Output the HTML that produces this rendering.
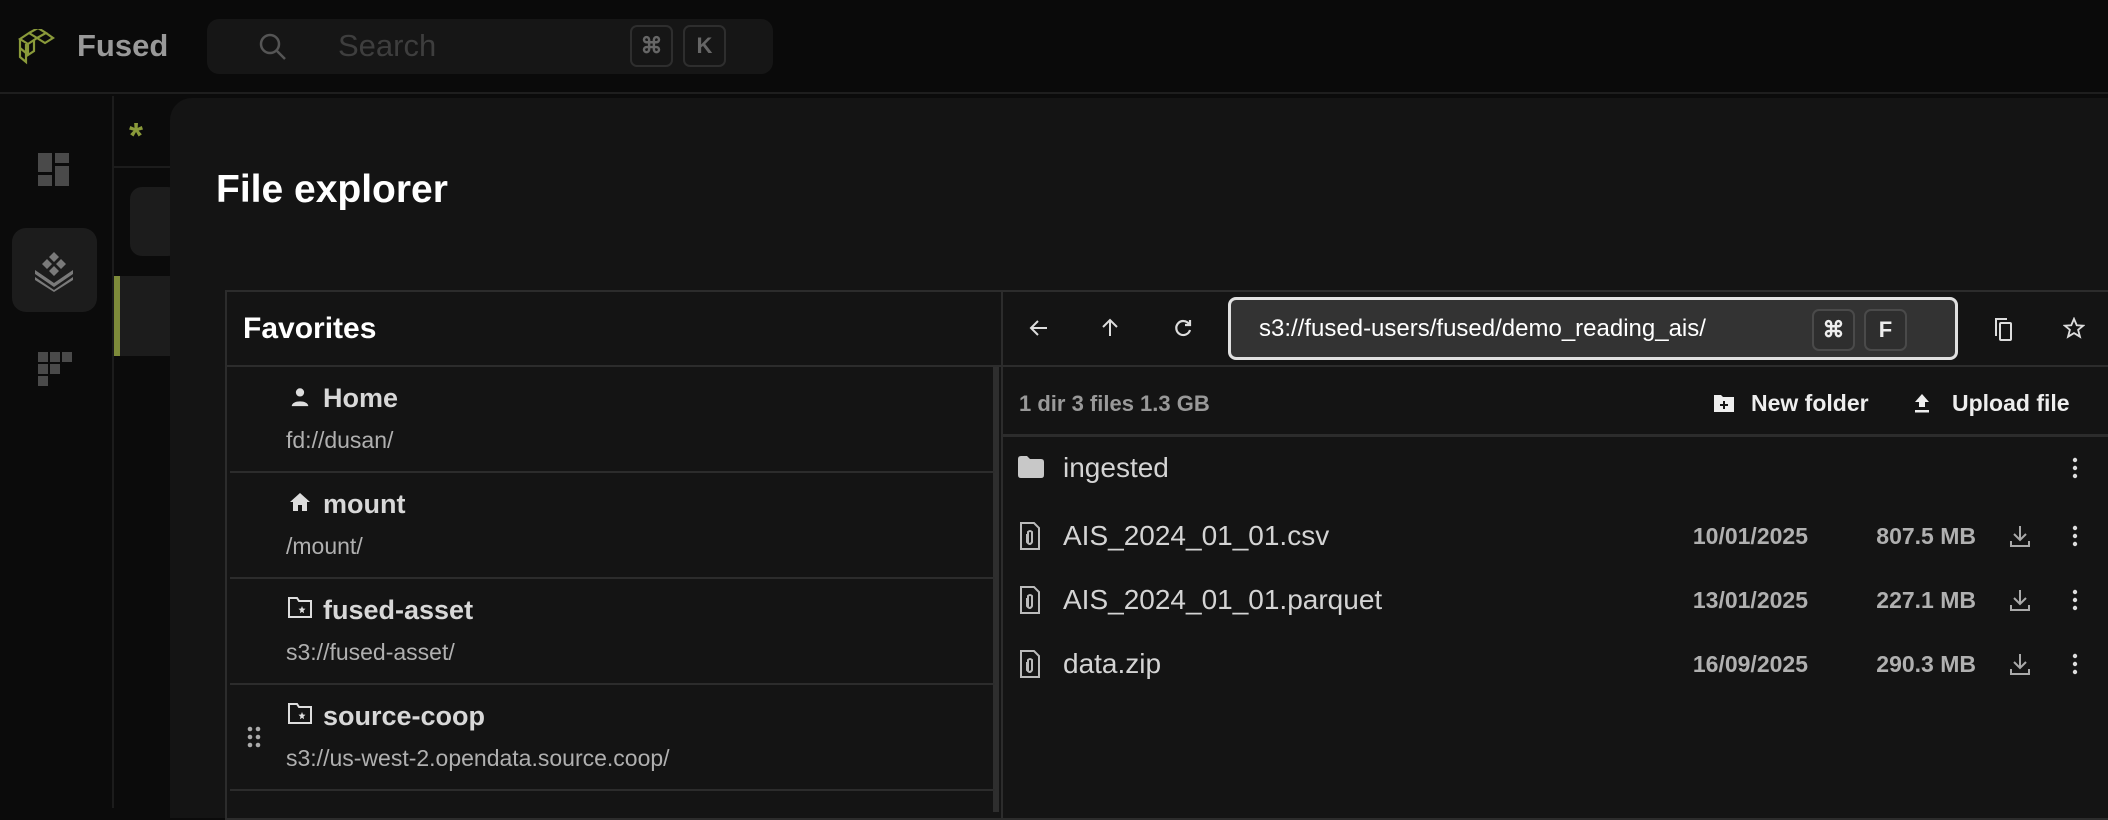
<!DOCTYPE html>
<html><head><meta charset="utf-8"><style>
*{box-sizing:border-box;margin:0;padding:0}
body{width:2108px;height:808px;overflow:hidden;background:#0b0b0b;font-family:"Liberation Sans",sans-serif;position:relative;color:#ddd}
.a{position:absolute}
.kbd{position:absolute;border:2px solid #2e2e2e;border-radius:7px;color:#666;font-size:22px;font-weight:bold;display:flex;align-items:center;justify-content:center}
.sep{position:absolute;left:230px;width:765px;height:2px;background:#2c2c2c}
.tt{position:absolute;left:323px;font-size:27px;font-weight:bold;color:#d8d8d8}
.st{position:absolute;left:286px;font-size:23px;color:#b0b0b0}
.fn{position:absolute;left:1063px;font-size:28px;color:#d4d4d4}
.dt{position:absolute;right:300px;font-size:23px;color:#b0b0b0;font-weight:bold}
.sz{position:absolute;right:132px;font-size:23px;color:#b0b0b0;font-weight:bold}
</style></head><body>
<!-- top bar -->
<div class="a" style="left:0;top:0;width:2108px;height:94px;background:#0a0a0a;border-bottom:2px solid #1e1e1e"></div>
<svg class="a" style="left:17px;top:29px" width="38" height="36" viewBox="0 0 38 36" fill="none" stroke="#8a9a3a" stroke-width="2.2"><path d="M3 10 L12 4 L20 9 L11 15 Z M12 4 L21 -1 L29 4 L20 9 M20 9 L28 14 L36 9 L29 4 M3 10 V28 L9 33 V15 M3 19 L9 24 M11 15 V26 L17 22 V11"/></svg>
<div class="a" style="left:77px;top:28px;font-size:31px;font-weight:bold;color:#999">Fused</div>
<div class="a" style="left:207px;top:19px;width:566px;height:55px;background:#161616;border-radius:12px"></div>
<svg class="a" style="left:258px;top:32px" width="30" height="30" viewBox="0 0 30 30" fill="none" stroke="#555" stroke-width="2.5"><circle cx="12" cy="12" r="9"/><path d="M19 19 L27 27"/></svg>
<div class="a" style="left:338px;top:28px;font-size:31px;color:#3e3e3e">Search</div>
<div class="kbd" style="left:630px;top:25px;width:43px;height:42px">⌘</div>
<div class="kbd" style="left:683px;top:25px;width:43px;height:42px">K</div>
<!-- sidebar -->
<div class="a" style="left:112px;top:96px;width:2px;height:712px;background:#1c1c1c"></div>
<svg class="a" style="left:38px;top:153px" width="32" height="33" viewBox="0 0 32 33" fill="#4a4a4a"><rect x="0" y="0" width="14" height="19"/><rect x="17" y="0" width="14" height="10"/><rect x="0" y="22" width="14" height="11"/><rect x="17" y="13" width="14" height="20"/></svg>
<div class="a" style="left:12px;top:228px;width:85px;height:84px;background:#1c1c1c;border-radius:14px"></div>
<svg class="a" style="left:33px;top:250px" width="42" height="42" viewBox="0 0 42 42" fill="#7a7a7a"><path d="M21 2 L26 7 L21 12 L16 7Z M14 9 L19 14 L14 19 L9 14Z M28 9 L33 14 L28 19 L23 14Z M21 16 L26 21 L21 26 L16 21Z"/><path d="M2 20 L21 33 L40 20 V24 L21 37 L2 24Z M2 27 L21 40 L40 27 V30 L21 42 L2 30Z"/></svg>
<svg class="a" style="left:38px;top:352px" width="34" height="34" viewBox="0 0 34 34" fill="#4a4a4a"><rect x="0" y="0" width="10" height="10"/><rect x="12" y="0" width="10" height="10"/><rect x="24" y="0" width="10" height="10"/><rect x="0" y="12" width="10" height="10"/><rect x="12" y="12" width="10" height="10"/><rect x="0" y="24" width="10" height="10"/></svg>
<div class="a" style="left:129px;top:115px;font-size:36px;font-weight:bold;color:#8a9a3a">*</div>
<div class="a" style="left:114px;top:166px;width:60px;height:2px;background:#1c1c1c"></div>
<div class="a" style="left:130px;top:187px;width:50px;height:69px;background:#1c1c1c;border-radius:12px"></div>
<div class="a" style="left:114px;top:276px;width:60px;height:80px;background:#1c1c1c"></div>
<div class="a" style="left:114px;top:276px;width:6px;height:80px;background:#7d8a3a"></div>
<!-- modal -->
<div class="a" style="left:170px;top:98px;width:1950px;height:720px;background:#141414;border-radius:22px 0 0 0"></div>
<div class="a" style="left:216px;top:168px;font-size:39px;font-weight:bold;color:#fff">File explorer</div>
<div class="a" style="left:225px;top:290px;width:1900px;height:530px;border:2px solid #2c2c2c"></div>
<div class="a" style="left:1001px;top:290px;width:2px;height:530px;background:#2c2c2c"></div>
<div class="a" style="left:227px;top:365px;width:1890px;height:2px;background:#2c2c2c"></div>
<div class="a" style="left:243px;top:312px;font-size:30px;font-weight:bold;color:#fff">Favorites</div>
<div class="a" style="left:993px;top:367px;width:6px;height:445px;background:#2e2e2e"></div>
<!-- favorites -->
<svg class="a" style="left:289px;top:386px" width="22" height="22" viewBox="0 0 24 24" fill="#ddd"><circle cx="12" cy="7" r="4.5"/><path d="M3 22 C3 15 21 15 21 22Z"/></svg>
<div class="tt" style="top:383px">Home</div>
<div class="st" style="top:427px">fd://dusan/</div>
<div class="sep" style="top:471px"></div>
<svg class="a" style="left:288px;top:490px" width="24" height="24" viewBox="0 0 24 24" fill="#ddd"><path d="M12 3 L22 12 H19 V21 H14 V15 H10 V21 H5 V12 H2Z"/></svg>
<div class="tt" style="top:489px">mount</div>
<div class="st" style="top:533px">/mount/</div>
<div class="sep" style="top:577px"></div>
<svg class="a" style="left:288px;top:596px" width="24" height="22" viewBox="0 0 24 22" fill="none" stroke="#ddd" stroke-width="2"><path d="M1 2 H9 L11 5 H23 V21 H1Z"/><path d="M14 10 l1 2.5 2.5 .3 -2 1.8 .6 2.6 -2.1-1.3 -2.1 1.3 .6-2.6 -2-1.8 2.5-.3Z" fill="#ddd" stroke="none"/></svg>
<div class="tt" style="top:595px">fused-asset</div>
<div class="st" style="top:639px">s3://fused-asset/</div>
<div class="sep" style="top:683px"></div>
<svg class="a" style="left:288px;top:702px" width="24" height="22" viewBox="0 0 24 22" fill="none" stroke="#ddd" stroke-width="2"><path d="M1 2 H9 L11 5 H23 V21 H1Z"/><path d="M14 10 l1 2.5 2.5 .3 -2 1.8 .6 2.6 -2.1-1.3 -2.1 1.3 .6-2.6 -2-1.8 2.5-.3Z" fill="#ddd" stroke="none"/></svg>
<div class="tt" style="top:701px">source-coop</div>
<div class="st" style="top:745px">s3://us-west-2.opendata.source.coop/</div>
<svg class="a" style="left:247px;top:726px" width="14" height="22" viewBox="0 0 14 22" fill="#aaa"><circle cx="3" cy="3" r="2.3"/><circle cx="11" cy="3" r="2.3"/><circle cx="3" cy="11" r="2.3"/><circle cx="11" cy="11" r="2.3"/><circle cx="3" cy="19" r="2.3"/><circle cx="11" cy="19" r="2.3"/></svg>
<div class="sep" style="top:789px"></div>
<!-- toolbar -->
<svg class="a" style="left:1029px;top:318px" width="20" height="20" viewBox="0 0 20 20" fill="none" stroke="#ddd" stroke-width="2"><path d="M18 10 H3 M9 3 L2 10 L9 17"/></svg>
<svg class="a" style="left:1100px;top:318px" width="20" height="20" viewBox="0 0 20 20" fill="none" stroke="#ddd" stroke-width="2"><path d="M10 18 V3 M3 9 L10 2 L17 9"/></svg>
<svg class="a" style="left:1173px;top:318px" width="20" height="20" viewBox="0 0 20 20" fill="none" stroke="#ddd" stroke-width="2.2"><path d="M16 6 A7 7 0 1 0 17 12"/><path d="M17 2 V7 H12" /></svg>
<div class="a" style="left:1228px;top:297px;width:730px;height:63px;background:#333;border:3px solid #e0e0e0;border-radius:8px"></div>
<div class="a" style="left:1259px;top:315px;font-size:24px;color:#fff">s3://fused-users/fused/demo_reading_ais/</div>
<div class="kbd" style="left:1812px;top:309px;width:43px;height:42px;border-color:#4a4a4a;color:#eee;background:#2e2e2e">⌘</div>
<div class="kbd" style="left:1864px;top:309px;width:43px;height:42px;border-color:#4a4a4a;color:#eee;background:#2e2e2e">F</div>
<svg class="a" style="left:1992px;top:316px" width="22" height="26" viewBox="0 0 22 26" fill="none" stroke="#ddd" stroke-width="2"><path d="M4 20 V3 H15"/><rect x="8" y="7" width="11" height="17" rx="1"/></svg>
<svg class="a" style="left:2063px;top:317px" width="22" height="22" viewBox="0 0 24 24" fill="none" stroke="#ddd" stroke-width="2"><path d="M12 2 L15 9 L22 9.5 L16.5 14 L18.5 21.5 L12 17.5 L5.5 21.5 L7.5 14 L2 9.5 L9 9Z"/></svg>
<!-- info row -->
<div class="a" style="left:1019px;top:391px;font-size:22px;font-weight:bold;color:#999">1 dir 3 files 1.3 GB</div>
<svg class="a" style="left:1713px;top:393px" width="22" height="20" viewBox="0 0 22 20" fill="#eee"><path d="M1 2 H8 L10 4 H21 V19 H1Z"/><path d="M11 8 V16 M7 12 H15" stroke="#141414" stroke-width="2"/></svg>
<div class="a" style="left:1751px;top:390px;font-size:23px;font-weight:bold;color:#eee">New folder</div>
<svg class="a" style="left:1913px;top:393px" width="18" height="20" viewBox="0 0 18 20" fill="#eee"><path d="M9 1 L16 9 H12 V14 H6 V9 H2Z"/><rect x="2" y="17" width="14" height="2.5"/></svg>
<div class="a" style="left:1952px;top:390px;font-size:23px;font-weight:bold;color:#eee">Upload file</div>
<div class="a" style="left:1003px;top:434px;width:1110px;height:3px;background:#2c2c2c"></div>
<!-- files -->
<svg class="a" style="left:1018px;top:456px" width="26" height="22" viewBox="0 0 26 22" fill="#c8c8c8"><path d="M0 3 Q0 0 3 0 H9 L12 3 H23 Q26 3 26 6 V19 Q26 22 23 22 H3 Q0 22 0 19Z"/></svg>
<div class="fn" style="top:452px">ingested</div>
<svg class="a" style="left:1019px;top:521px" width="22" height="30" viewBox="0 0 22 30" fill="none" stroke="#bbb" stroke-width="2"><path d="M2 2 H15 L20 7 V28 H2Z"/><path d="M9 22 V11 Q11 9 13 11 V21 Q11 25 8 21 V13"/></svg>
<div class="fn" style="top:520px">AIS_2024_01_01.csv</div>
<svg class="a" style="left:1019px;top:585px" width="22" height="30" viewBox="0 0 22 30" fill="none" stroke="#bbb" stroke-width="2"><path d="M2 2 H15 L20 7 V28 H2Z"/><path d="M9 22 V11 Q11 9 13 11 V21 Q11 25 8 21 V13"/></svg>
<div class="fn" style="top:584px">AIS_2024_01_01.parquet</div>
<svg class="a" style="left:1019px;top:649px" width="22" height="30" viewBox="0 0 22 30" fill="none" stroke="#bbb" stroke-width="2"><path d="M2 2 H15 L20 7 V28 H2Z"/><path d="M9 22 V11 Q11 9 13 11 V21 Q11 25 8 21 V13"/></svg>
<div class="fn" style="top:648px">data.zip</div>
<div class="dt" style="top:523px">10/01/2025</div><div class="sz" style="top:523px">807.5 MB</div>
<div class="dt" style="top:587px">13/01/2025</div><div class="sz" style="top:587px">227.1 MB</div>
<div class="dt" style="top:651px">16/09/2025</div><div class="sz" style="top:651px">290.3 MB</div>
<svg class="a" style="left:2009px;top:524px" width="22" height="24" viewBox="0 0 22 24" fill="none" stroke="#aaa" stroke-width="2"><path d="M11 2 V15 M5 10 L11 16 L17 10 M2 17 V22 H20 V17"/></svg>
<svg class="a" style="left:2009px;top:588px" width="22" height="24" viewBox="0 0 22 24" fill="none" stroke="#aaa" stroke-width="2"><path d="M11 2 V15 M5 10 L11 16 L17 10 M2 17 V22 H20 V17"/></svg>
<svg class="a" style="left:2009px;top:652px" width="22" height="24" viewBox="0 0 22 24" fill="none" stroke="#aaa" stroke-width="2"><path d="M11 2 V15 M5 10 L11 16 L17 10 M2 17 V22 H20 V17"/></svg>
<svg class="a" style="left:2071px;top:457px" width="8" height="22" viewBox="0 0 8 22" fill="#ddd"><circle cx="4" cy="3" r="2.2"/><circle cx="4" cy="11" r="2.2"/><circle cx="4" cy="19" r="2.2"/></svg>
<svg class="a" style="left:2071px;top:525px" width="8" height="22" viewBox="0 0 8 22" fill="#ddd"><circle cx="4" cy="3" r="2.2"/><circle cx="4" cy="11" r="2.2"/><circle cx="4" cy="19" r="2.2"/></svg>
<svg class="a" style="left:2071px;top:589px" width="8" height="22" viewBox="0 0 8 22" fill="#ddd"><circle cx="4" cy="3" r="2.2"/><circle cx="4" cy="11" r="2.2"/><circle cx="4" cy="19" r="2.2"/></svg>
<svg class="a" style="left:2071px;top:653px" width="8" height="22" viewBox="0 0 8 22" fill="#ddd"><circle cx="4" cy="3" r="2.2"/><circle cx="4" cy="11" r="2.2"/><circle cx="4" cy="19" r="2.2"/></svg>
</body></html>
